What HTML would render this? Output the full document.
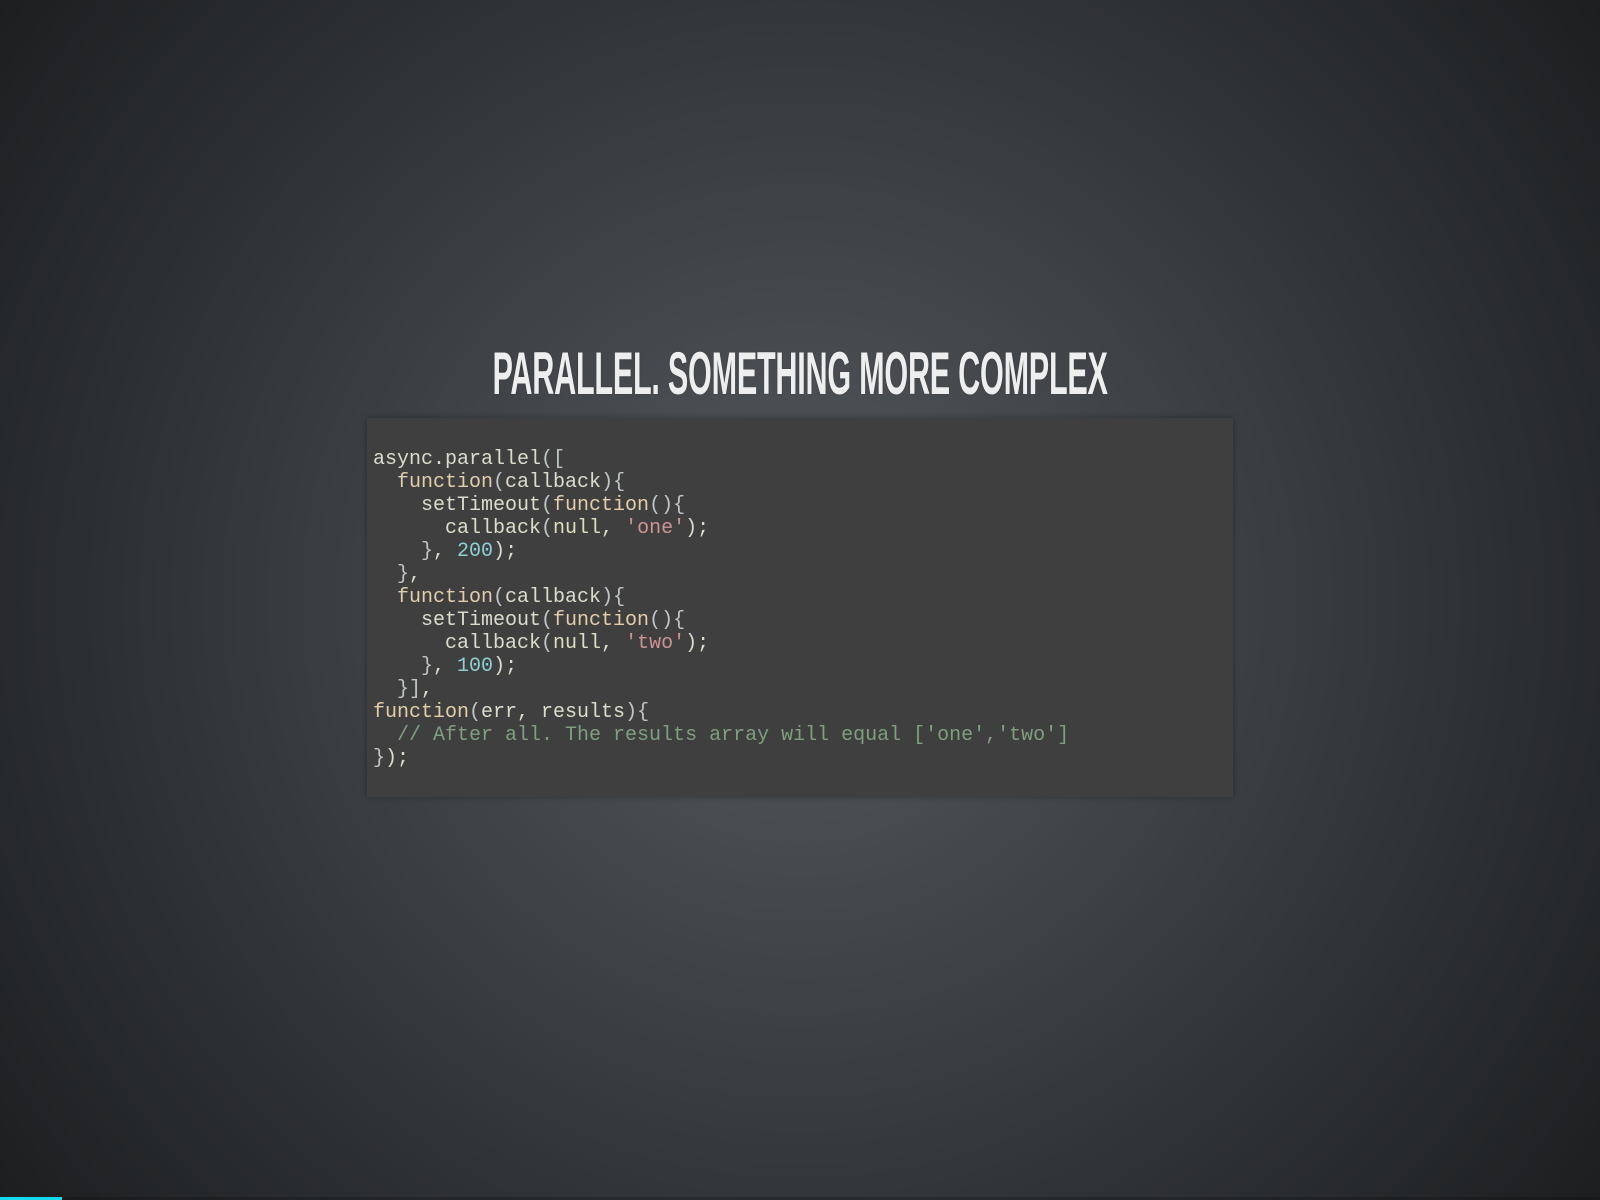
<!DOCTYPE html>
<html><head><meta charset="utf-8"><style>
html,body{margin:0;width:1600px;height:1200px;overflow:hidden}
body{background:radial-gradient(circle at 50% 50%,#555a5f 0%,#1c1e20 100%);font-family:"Liberation Sans",sans-serif;position:relative}
h2{position:absolute;left:0;top:339px;width:1600px;margin:0;text-align:center;color:#eee;font-family:"Liberation Sans Narrow","Liberation Sans",sans-serif;font-weight:bold;font-size:60px;line-height:70px;text-shadow:0 0 2px rgba(0,0,0,.3)}
h2 span{display:inline-block;transform:scaleX(0.51);transform-origin:center;white-space:nowrap;letter-spacing:-0.5px}
pre{position:absolute;left:367px;top:418px;width:866px;height:379px;margin:0;box-sizing:border-box;background:#3f3f3f;box-shadow:0 0 6px rgba(0,0,0,.3);padding:30px 6px 0 6px;font-family:"Liberation Mono",monospace;font-size:20px;line-height:23px;color:#dcdccc}
.k{color:#e3ceab}.n{color:#dfdfbf}.s{color:#cc9393}.d{color:#8cd0d3}.c{color:#7f9f7f}.p{color:#c0c6c8}
.bar{position:absolute;left:0;bottom:0;width:1600px;height:3px;background:rgba(0,0,0,.2)}
.bar i{display:block;width:62px;height:3px;background:#13daec}
</style></head><body>
<h2><span>PARALLEL. SOMETHING MORE COMPLEX</span></h2>
<pre>
async.parallel<span class="p">([</span>
  <span class="k">function</span><span class="p">(</span>callback<span class="p">){</span>
    setTimeout<span class="p">(</span><span class="k">function</span><span class="p">(){</span>
      callback<span class="p">(</span><span class="n">null</span>, <span class="s">'one'</span>);
    <span class="p">}</span>, <span class="d">200</span>);
  <span class="p">}</span>,
  <span class="k">function</span><span class="p">(</span>callback<span class="p">){</span>
    setTimeout<span class="p">(</span><span class="k">function</span><span class="p">(){</span>
      callback<span class="p">(</span><span class="n">null</span>, <span class="s">'two'</span>);
    <span class="p">}</span>, <span class="d">100</span>);
  <span class="p">}]</span>,
<span class="k">function</span><span class="p">(</span>err, results<span class="p">){</span>
  <span class="c">// After all. The results array will equal ['one','two']</span>
<span class="p">}</span>);
</pre>
<div class="bar"><i></i></div>
</body></html>
